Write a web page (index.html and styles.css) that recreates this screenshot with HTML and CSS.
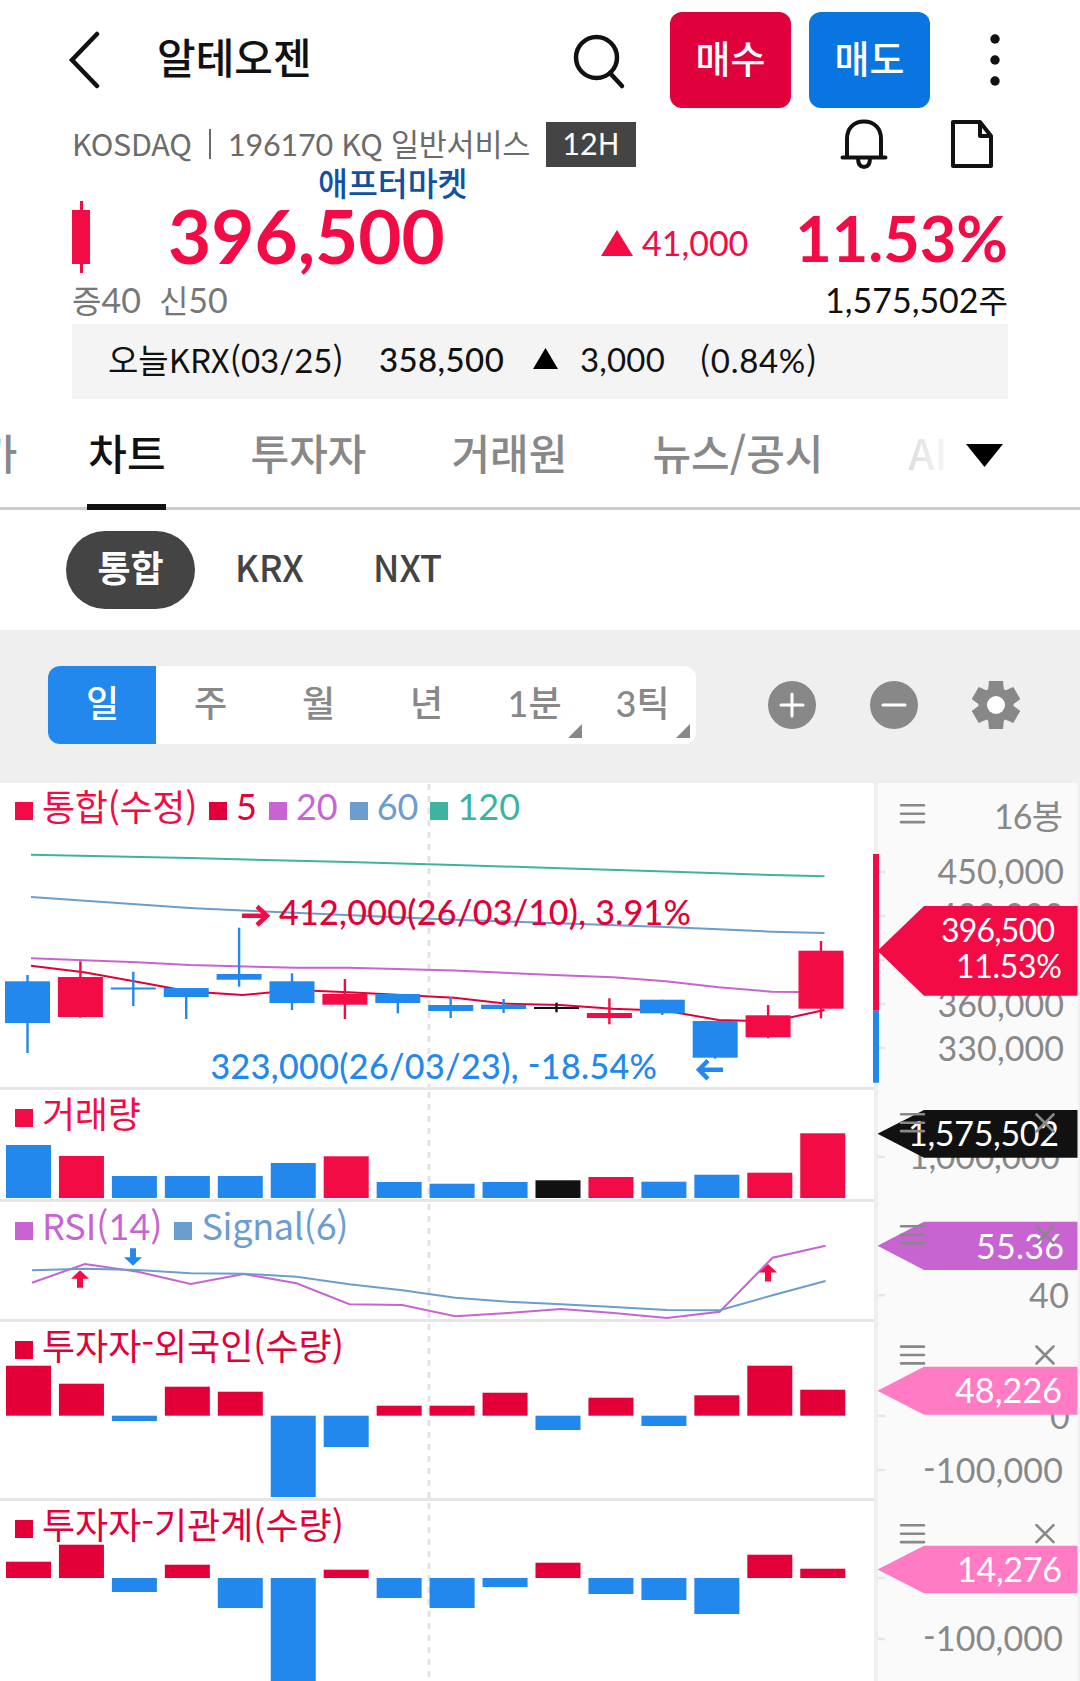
FILE: index.html
```html
<!DOCTYPE html>
<html lang="ko">
<head>
    <meta charset="UTF-8">
    <meta name="viewport" content="width=device-width, initial-scale=1.0">
    <title>알테오젠 차트</title>
    <link rel="stylesheet" href="styles.css">
</head>
<body>
    <header class="topbar">
        <svg class="back" width="32" height="58" viewBox="0 0 32 58"><path d="M29 3 L4 29 L29 55"/></svg>
        <h1>알테오젠</h1>
        <svg class="search" width="54" height="60" viewBox="0 0 54 60"><circle cx="24.500" cy="27.500" r="20.500"/><path d="M38 43 L50 56"/></svg>
        <button class="trade buy">매수</button>
        <button class="trade sell">매도</button>
        <svg class="more" width="12" height="54" viewBox="0 0 12 54"><circle cx="6" cy="6" r="4.700"/><circle cx="6" cy="27" r="4.700"/><circle cx="6" cy="48" r="4.700"/></svg>
    </header>

    <section class="quote">
        <div class="meta">
            <span class="market">KOSDAQ</span>
            <span class="bar"></span>
            <span class="code"><span class="num">196170</span> KQ 일반서비스</span>
            <span class="badge"><span class="num">12</span>H</span>
            <svg class="bell" width="48" height="50" viewBox="0 0 48 50"><path d="M7 38 V20 C7 9 14 2.500 24 2.500 C34 2.500 41 9 41 20 V38 M2.500 38.500 H45.500 M18 39 C18 45 20 48 24 48 C28 48 30 45 30 39"/></svg>
            <svg class="doc" width="44" height="50" viewBox="0 0 44 50"><path d="M3 3 H30 L41 17 V47 H3 Z M30 3 V17 H41"/></svg>
        </div>
        <div class="session">애프터마켓</div>
        <div class="price-row">
            <svg class="mini-candle" width="18" height="72"><rect x="8" width="3" height="72"/><rect y="9" width="18" height="54"/></svg>
            <span class="price num">396,500</span>
            <svg class="up" width="32" height="26"><path d="M0 26 L16 0 L32 26 Z"/></svg>
            <span class="change num">41,000</span>
            <span class="rate num">11.53%</span>
        </div>
        <div class="credit">
            <span>증<span class="num">40</span></span>
            <span>신<span class="num">50</span></span>
            <span class="volume"><span class="num">1,575,502</span>주</span>
        </div>
        <div class="krx">
            <span class="krx-name">오늘KRX(<span class="num">03/25</span>)</span>
            <span class="krx-price num">358,500</span>
            <svg class="krx-up" width="25" height="21"><path d="M0 21 L12.500 0 L25 21 Z"/></svg>
            <span class="krx-change num">3,000</span>
            <span class="krx-rate">(<span class="num">0.84%</span>)</span>
        </div>
    </section>

    <nav class="tabs">
        <a class="cut">호가</a>
        <a class="active">차트</a>
        <a>투자자</a>
        <a>거래원</a>
        <a class="news">뉴스/공시</a>
        <a class="fade">AI</a>
        <svg class="tab-more" width="37" height="23"><path d="M0 0 H37 L18.500 23 Z"/></svg>
    </nav>

    <div class="venues">
        <span class="venue on">통합</span>
        <span class="venue krx-tab">KRX</span>
        <span class="venue nxt-tab">NXT</span>
    </div>

    <div class="toolbar">
        <div class="periods">
            <span class="on">일</span>
            <span>주</span>
            <span>월</span>
            <span>년</span>
            <span class="menu"><span class="num">1</span>분</span>
            <span class="menu"><span class="num">3</span>틱</span>
        </div>
        <svg class="tool" width="48" height="48" viewBox="-24 -24 48 48"><circle r="24"/><path class="sign" d="M-11 0 H11 M0 -11 V11"/></svg>
        <svg class="tool" width="48" height="48" viewBox="-24 -24 48 48"><circle r="24"/><path class="sign" d="M-11 0 H11"/></svg>
        <svg class="tool" width="48" height="48" viewBox="-24 -24 48 48">
            <circle r="17.500"/>
            <g id="teeth"></g>
            <circle class="hole" r="9"/>
        </svg>
    </div>

    <main class="chart">
        <section class="pane price-pane">
            <div class="legend">
                <i class="red"></i><span class="red tight">통합(수정)</span>
                <i class="crimson"></i><span class="num crimson">5</span>
                <i class="purple"></i><span class="num purple">20</span>
                <i class="steel"></i><span class="num steel">60</span>
                <i class="green"></i><span class="num green">120</span>
            </div>
            <svg id="pricePane" width="1080" height="308" viewBox="0 782 1080 308"></svg>
        </section>
        <section class="pane">
            <div class="legend"><i class="red"></i><span class="red tight">거래량</span></div>
            <svg id="volumePane" width="1080" height="112" viewBox="0 1090 1080 112"></svg>
        </section>
        <section class="pane">
            <div class="legend">
                <i class="purple"></i><span class="purple">RSI(<span class="num">14</span>)</span>
                <i class="steel"></i><span class="steel tight">Signal(<span class="num">6</span>)</span>
            </div>
            <svg id="rsiPane" width="1080" height="120" viewBox="0 1202 1080 120"></svg>
        </section>
        <section class="pane">
            <div class="legend"><i class="crimson"></i><span class="crimson">투자자<span class="hyphen">-</span>외국인(수량)</span></div>
            <svg id="foreignPane" width="1080" height="179" viewBox="0 1322 1080 179"></svg>
        </section>
        <section class="pane">
            <div class="legend"><i class="crimson"></i><span class="crimson">투자자<span class="hyphen">-</span>기관계(수량)</span></div>
            <svg id="instPane" width="1080" height="180" viewBox="0 1501 1080 180"></svg>
        </section>
    </main>

    <script src="chart.js"></script>
</body>
</html>
```
FILE: styles.css
```css
* {
    box-sizing: border-box;
}

body {
    margin: 0;
    width: 1080px;
    height: 1681px;
    overflow: hidden;
    background-color: #fff;
    color: #111;
    font-family: "Noto Sans CJK KR", sans-serif;
}

svg {
    display: block;
    flex: none;
}

.num {
    font-family: Lato, "Noto Sans CJK KR", sans-serif;
}

/* top bar */
.topbar {
    display: flex;
    align-items: center;
    height: 119px;
    padding: 0 0 0 68px;
}

.topbar path,
.search circle {
    fill: none;
    stroke: #111;
    stroke-width: 4.5;
    stroke-linecap: round;
}

h1 {
    flex: none;
    width: 415px;
    margin: 0 0 7px 57px;
    font-size: 42px;
    line-height: 60px;
    font-weight: 500;
}

.search {
    margin-right: 44px;
}

.trade {
    flex: none;
    width: 121px;
    height: 96px;
    margin-right: 18px;
    padding: 0 0 6px;
    border: none;
    border-radius: 12px;
    color: #fff;
    font-family: inherit;
    font-size: 38px;
    font-weight: 500;
}

.buy {
    background-color: #df003c;
}

.sell {
    background-color: #0875e1;
}

.more {
    margin-left: 41px;
    fill: #111;
}

/* quote */
.quote {
    padding: 0 72px;
}

.meta {
    display: flex;
    align-items: center;
    height: 50px;
    font-size: 30.5px;
    line-height: 46px;
    color: #6b6b6b;
}

.market,
.code {
    white-space: nowrap;
    margin-bottom: 2px;
}

.market {
    width: 137px;
    letter-spacing: -0.3px;
}

.bar {
    width: 2px;
    height: 30px;
    margin-bottom: 1px;
    background-color: #6b6b6b;
}

.code {
    width: 318px;
    margin-left: 17px;
    letter-spacing: -0.2px;
}

.badge {
    width: 90px;
    height: 45px;
    padding-bottom: 3px;
    background-color: #444;
    color: #fff;
    line-height: 41px;
    text-align: center;
}

.bell {
    margin-left: 204px;
}

.doc {
    margin-left: 62px;
}

.bell path,
.doc path {
    fill: none;
    stroke: #111;
    stroke-width: 4;
    stroke-linecap: round;
    stroke-linejoin: round;
}

.session {
    padding-left: 246px;
    height: 26px;
    line-height: 26px;
    font-size: 32.5px;
    font-weight: 500;
    color: #1250a5;
}

.price-row {
    display: flex;
    align-items: center;
    height: 84px;
    color: #f30b45;
    fill: #f30b45;
}

.price {
    width: 433px;
    margin-left: 78px;
    padding-bottom: 4px;
    font-size: 74.5px;
    font-weight: 700;
}

.up {
    margin-top: 12px;
}

.change {
    width: 110px;
    margin-left: 9px;
    padding-top: 11px;
    font-size: 34px;
}

.rate {
    margin-left: auto;
    font-size: 63px;
    font-weight: 700;
}

.credit {
    display: flex;
    height: 40px;
    margin-bottom: 5px;
    font-size: 32px;
    line-height: 40px;
    color: #777;
    gap: 18px;
}

.credit .num {
    font-size: 34px;
}

.volume {
    margin-left: auto;
    color: #111;
}

.krx {
    display: flex;
    align-items: center;
    height: 75px;
    padding: 0 0 6px 36px;
    background-color: #f4f4f4;
    font-size: 33px;
}

.krx-name {
    width: 271px;
}

.krx-price {
    width: 154px;
    padding-top: 1px;
    font-weight: 500;
    letter-spacing: 0.4px;
}

.krx-change {
    width: 119px;
    padding-top: 1px;
    margin-left: 22px;
    letter-spacing: 0.2px;
}

.krx-rate {
    letter-spacing: 0.7px;
}

/* tabs */
.tabs {
    display: flex;
    height: 111px;
    border-bottom: 3px solid #ccc;
    font-size: 42px;
    line-height: 105px;
    font-weight: 500;
    color: #888;
    white-space: nowrap;
}

.tabs a {
    flex: none;
    margin-right: 85px;
}

.tabs .cut {
    margin-left: -60px;
    margin-right: 70px;
}

.tabs .active {
    height: 111px;
    padding-left: 1px;
    border-bottom: 6px solid #111;
    color: #111;
}

.tabs .news {
    margin-right: 85px;
}

.tabs .fade {
    width: 44px;
    margin-right: 14px;
    background: linear-gradient(90deg, #ddd, #fafafa);
    -webkit-background-clip: text;
    background-clip: text;
    color: transparent;
}

.tab-more {
    margin-top: 45px;
}

/* venues */
.venues {
    display: flex;
    height: 120px;
    padding: 21px 0 0 66px;
    font-size: 36px;
    line-height: 70px;
    font-weight: 500;
    color: #444;
}

.venue.on {
    width: 129px;
    height: 78px;
    border-radius: 39px;
    background-color: #444;
    color: #fff;
    text-align: center;
    font-weight: 700;
}

.krx-tab {
    width: 138px;
    margin-left: 40px;
}

/* toolbar */
.toolbar {
    display: flex;
    align-items: center;
    height: 152px;
    padding-left: 48px;
    background-color: #efefef;
}

.periods {
    display: flex;
    width: 648px;
    height: 78px;
    margin: 0 72px 2px 0;
    border-radius: 12px;
    background-color: #fff;
    overflow: hidden;
    font-size: 36px;
    line-height: 70px;
    font-weight: 500;
    color: #888;
}

.periods > span {
    position: relative;
    width: 108px;
    padding-left: 1px;
    text-align: center;
}

.periods .on {
    background-color: #2388ed;
    color: #fff;
}

.menu::after {
    content: "";
    position: absolute;
    right: 6px;
    bottom: 6px;
    border-left: 14px solid transparent;
    border-bottom: 14px solid #888;
}

.tool {
    margin-right: 54px;
    margin-bottom: 2px;
    fill: #888;
}

.tool .sign {
    stroke: #fff;
    stroke-width: 3;
    stroke-linecap: round;
}

.tool .hole {
    fill: #fff;
}

/* chart */
.pane {
    position: relative;
}

.legend {
    position: absolute;
    top: -1px;
    left: 15px;
    display: flex;
    align-items: center;
    font-size: 36px;
    line-height: 47px;
    white-space: nowrap;
}

.legend i {
    width: 18px;
    height: 18px;
    margin: 11px 9px 0 0;
    background-color: currentColor;
}

.legend > span {
    margin-right: 12px;
}

.legend > .num {
    padding-top: 2px;
}

.legend .tight {
    letter-spacing: -0.3px;
}

.hyphen {
    position: relative;
    top: -3px;
}

.red { color: #f30b45; fill: #f30b45; }
.crimson { color: #e30038; fill: #e30038; }
.purple { color: #c864d2; fill: #c864d2; }
.steel { color: #6b9dcf; fill: #6b9dcf; }
.green { color: #3db3a0; fill: #3db3a0; }
.blue { color: #2388ed; fill: #2388ed; }
.black { color: #111; fill: #111; }
.pink { color: #ff7cc5; fill: #ff7cc5; }

.pane text {
    font-family: Lato, "Noto Sans CJK KR", sans-serif;
    font-size: 34px;
}

.axis-bg { fill: #fafafa; }
.edge { fill: #efefef; }
.rule { fill: #e6e6e6; }
.label { fill: #888; }
.tag-text { fill: #fff; }

.note {
    font-weight: 500;
}

.dash {
    stroke: #e3e3e3;
    stroke-width: 3;
    stroke-dasharray: 6 6;
}

.pane .line {
    fill: none;
    stroke: currentColor;
    stroke-width: 2;
}

.pane .arrow {
    fill: none;
    stroke: currentColor;
    stroke-width: 4.5;
}

.icon {
    fill: none;
    stroke: #888;
    stroke-width: 2.6;
    stroke-linecap: round;
}
```
FILE: chart.js
```js
const STEP = 52.9;

// gear teeth
let teeth = '';
for (let i = 0; i < 6; i++) {
    teeth += `<path d="M-7 -24 H7 L8 -14 H-8 Z" transform="rotate(${i * 60})"/>`;
}
document.getElementById('teeth').innerHTML = teeth;

function rect(x, y, w, h, cls) {
    return `<rect x="${x}" y="${y}" width="${w}" height="${h}" class="${cls}"/>`;
}

// text stretched between two x positions, minus signs sit at digit centre
function text(x1, x2, y, str, cls, size) {
    const body = str.replace('-', '<tspan dy="-3">-</tspan><tspan dy="3">') + (str.includes('-') ? '</tspan>' : '');
    return `<text x="${x1}" y="${y + 0.8}" textLength="${x2 - x1}" class="${cls}"${size ? ` style="font-size:${size}px"` : ''}>${body}</text>`;
}

function frame(top, bottom, ticks) {
    let s = `<line class="dash" x1="429" x2="429" y1="${top + 2}" y2="${bottom}"/>`;
    s += rect(0, bottom - 3, 875, 3, 'rule');
    s += rect(878, top, 200, bottom - top, 'axis-bg');
    s += rect(874, top, 4, bottom - top, 'edge') + rect(1078, top, 2, bottom - top, 'edge');
    for (const t of ticks) s += rect(878, t - 1, 7, 2.5, 'rule');
    return s;
}

function line(x, points, cls) {
    const p = points.map(([i, y]) => `${x + i * STEP},${y}`).join(' ');
    return `<polyline class="line ${cls}" points="${p}"/>`;
}

function bars(base, values) {
    return values.map(([y, cls], i) => rect(6 + i * 52.95, Math.min(y, base), 45, Math.abs(y - base), cls)).join('');
}

function tag(top, bottom, cls) {
    return `<path class="${cls}" d="M877.5 ${(top + bottom) / 2} L924 ${top} H1077.5 V${bottom} H924 Z"/>`;
}

function menuIcon(y) {
    return `<path class="icon" d="M901 ${y - 8.4} H924 M901 ${y} H924 M901 ${y + 8.4} H924"/>`;
}

function closeIcon(y) {
    return `<path class="icon" d="M1036.5 ${y - 8.5} l17 17 M1053.5 ${y - 8.5} l-17 17"/>`;
}

function signal(x, y, dir, cls) {
    return `<path class="${cls}" d="M${x} ${y} l9 ${dir * 8.5} h-6 v${dir * 9} h-6 v${-dir * 9} h-6 Z"/>`;
}

const byIndex = list => list.map((y, i) => [i, y]);

// body top, body bottom, high, low
const candles = [
    [981.3, 1023, 975, 1053, 'blue'], [977, 1017, 961.3, 1017.7, 'red'],
    [987.5, 989.5, 971.7, 1006, 'blue'], [988, 997, 988, 1019, 'blue'],
    [974, 979.7, 927.7, 986.7, 'blue'], [981.3, 1003, 973.3, 1010, 'blue'],
    [994, 1004.7, 979, 1019, 'red'], [994, 1003, 994, 1013.3, 'blue'],
    [1005, 1011, 997, 1018, 'blue'], [1004.7, 1009, 999, 1013, 'blue'],
    [1007, 1009, 1002.7, 1012.3, 'black'], [1013, 1018, 998.3, 1024.3, 'red'],
    [999.7, 1013.3, 999.7, 1015, 'blue'], [1021, 1057.7, 1021, 1058.7, 'blue'],
    [1015.3, 1037.3, 1005, 1038.3, 'red'], [950.7, 1008.7, 941, 1018.3, 'red']
];

let price = frame(782, 1090, [871.7, 915.7, 959.7, 1003.7, 1047.7]);
price += rect(0, 782, 1080, 1, 'edge');
price += line(31, [[0, 854.7], [3, 858.1], [6, 862], [8, 864.9], [10, 868.2], [12, 871.5], [14, 875], [15, 876.3]], 'green');
price += line(31, [[0, 897], [3, 908], [4, 910.5], [8, 919.7], [12, 927], [13, 929.3], [14, 931.7], [15, 933]], 'steel');
price += line(31, [[0, 958.3], [2, 962.3], [3, 965], [5, 967.7], [6, 967.7], [8, 970.6], [10, 975.3], [11, 977.3], [12, 981.3], [13, 987.3], [14, 991.7], [15, 992.3]], 'purple');
price += line(31, byIndex([965.7, 972.3, 981.7, 991.5, 995, 990, 992.3, 995, 997.7, 1003.7, 1005, 1008.7, 1010.7, 1020, 1021.5, 1010]), 'crimson');
candles.forEach(([top, bottom, high, low, cls], i) => {
    price += rect(26.3 + i * STEP, high, 2.4, low - high, cls);
    price += rect(5 + i * STEP, top, 45, bottom - top, cls);
});
price += '<path class="arrow red" d="M242 915.7 H267 M257 906.5 L267 915.7 L257 925"/>';
price += text(279, 691, 924.3, '412,000(26/03/10), 3.91%', 'note crimson');
price += '<path class="arrow blue" d="M723 1069.7 H699 M708 1060.5 L699 1069.7 L708 1079"/>';
price += text(210.5, 657, 1078.3, '323,000(26/03/23), -18.54%', 'note blue');
price += rect(873, 854, 6, 156.7, 'red') + rect(873, 1010.7, 6, 72, 'blue');
price += text(994, 1063, 828, '16봉', 'label');
price += text(937.5, 1064, 883.5, '450,000', 'label') + text(937.5, 1064, 927.5, '420,000', 'label');
price += text(937.5, 1064, 1015.7, '360,000', 'label') + text(937.5, 1064, 1059.7, '330,000', 'label');
price += tag(906, 995.7, 'red');
price += text(941, 1055, 941.3, '396,500', 'tag-text', 32) + text(956, 1062, 977.3, '11.53%', 'tag-text', 32);
price += menuIcon(813.7);
document.getElementById('pricePane').innerHTML = price;

let volume = frame(1090, 1202, [1156.7]);
volume += bars(1198, [
    [1145, 'blue'], [1156, 'red'], [1176, 'blue'], [1176, 'blue'], [1176, 'blue'], [1163, 'blue'],
    [1156.3, 'red'], [1182, 'blue'], [1183.7, 'blue'], [1182, 'blue'], [1180.3, 'black'], [1177, 'red'],
    [1181.7, 'blue'], [1174.7, 'blue'], [1172.7, 'red'], [1133.3, 'red']
]);
volume += text(909, 1060, 1168.3, '1,000,000', 'label') + tag(1110, 1157.7, 'black');
volume += text(908, 1059, 1145.5, '1,575,502', 'tag-text') + menuIcon(1122.7) + closeIcon(1123);
document.getElementById('volumePane').innerHTML = volume;

let rsi = frame(1202, 1322, [1295]);
rsi += line(32, byIndex([1282.7, 1264, 1271.7, 1284, 1274, 1283.3, 1304.3, 1305, 1316.3, 1313, 1309, 1313, 1318, 1311.7, 1257.7, 1245.7]), 'purple');
rsi += line(32, byIndex([1270.3, 1268.7, 1270, 1273.3, 1273.7, 1276.7, 1284.3, 1290.3, 1297.7, 1301.7, 1304.3, 1307, 1310, 1310.3, 1295.3, 1281]), 'steel');
rsi += signal(133, 1265.7, -1, 'blue') + signal(80, 1270.3, 1, 'red') + signal(768, 1264, 1, 'red');
rsi += tag(1221.7, 1270, 'purple') + text(976, 1064, 1258, '55.36', 'tag-text') + text(1029, 1069, 1306.7, '40', 'label');
rsi += menuIcon(1234.7) + closeIcon(1234.7);
document.getElementById('rsiPane').innerHTML = rsi;

let foreign = frame(1322, 1501, [1415.7, 1469.7]);
foreign += bars(1415.7, [
    [1365.7, 'crimson'], [1383.7, 'crimson'], [1421, 'blue'], [1386.7, 'crimson'], [1391.7, 'crimson'], [1497, 'blue'],
    [1447, 'blue'], [1405.7, 'crimson'], [1405.7, 'crimson'], [1392.7, 'crimson'], [1430, 'blue'], [1397.7, 'crimson'],
    [1426, 'blue'], [1395.3, 'crimson'], [1365.7, 'crimson'], [1389.7, 'crimson']
]);
foreign += text(1050, 1070, 1427.7, '0', 'label') + text(923, 1063, 1481.7, '-100,000', 'label');
foreign += tag(1366.7, 1414.7, 'pink') + text(955, 1062, 1402, '48,226', 'tag-text');
foreign += menuIcon(1355) + closeIcon(1355);
document.getElementById('foreignPane').innerHTML = foreign;

let inst = frame(1501, 1684, [1577.7, 1638.7]);
inst += bars(1578, [
    [1561.7, 'crimson'], [1544.7, 'crimson'], [1592, 'blue'], [1564.7, 'crimson'], [1608, 'blue'], [1690, 'blue'],
    [1569.7, 'crimson'], [1598, 'blue'], [1608, 'blue'], [1587, 'blue'], [1562.7, 'crimson'], [1594, 'blue'],
    [1600, 'blue'], [1614, 'blue'], [1554.7, 'crimson'], [1568.7, 'crimson']
]);
inst += text(923, 1063, 1650, '-100,000', 'label') + tag(1545.7, 1593.3, 'pink');
inst += text(957, 1062, 1580.7, '14,276', 'tag-text') + menuIcon(1533.7) + closeIcon(1533.7);
document.getElementById('instPane').innerHTML = inst;
```
